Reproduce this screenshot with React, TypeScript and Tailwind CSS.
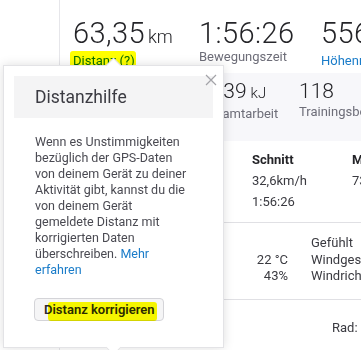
export default function App() {
  const font = "font-['Roboto','Liberation_Sans',sans-serif]";

  return (
    <div className={`relative w-[361px] h-[350px] overflow-hidden bg-white ${font} text-[#242428]`}>
      <div className="flex h-full">
        <div className="w-[60px] shrink-0 border-r border-[#e6e6ea]" />

        <div className="flex-1 flex flex-col min-w-0 overflow-hidden">
          {/* top stats */}
          <div className="h-[73px] shrink-0 pl-[13px] pt-[19px] flex whitespace-nowrap">
            <div className="w-[126px] shrink-0">
              <div className="text-[29px] leading-[28px] font-light tracking-[0.4px]">
                63,35<span className="text-[18px] ml-[3px] tracking-normal">km</span>
              </div>
              <div className="mt-[2px] text-[13px] leading-[16px] text-[#0a6fc2] relative">
                Distanz (?)
                <span className="absolute -left-[3px] -top-[2px] w-[66px] h-[18px] bg-[#ffff00] mix-blend-multiply rounded-[3px]" />
              </div>
            </div>
            <div className="w-[122px] shrink-0">
              <div className="text-[29px] leading-[28px] font-light tracking-[0.4px]">1:56:26</div>
              <div className="mt-[2px] text-[13px] leading-[16px] text-[#6d6d78]">Bewegungszeit</div>
            </div>
            <div className="shrink-0">
              <div className="text-[29px] leading-[28px] font-light tracking-[0.4px]">556<span className="text-[18px] ml-[3px] tracking-normal">m</span></div>
              <div className="mt-[2px] text-[13px] leading-[16px] text-[#1a7cc9]">Höhenmeter</div>
            </div>
          </div>

          {/* secondary stats band */}
          <div className="h-[68px] shrink-0 bg-[#f7f7fa] pl-[140px] pt-[8px] flex whitespace-nowrap">
            <div className="w-[99px] shrink-0">
              <div className="text-[21px] leading-[20px] font-light">1639<span className="text-[15px] ml-[4px]">kJ</span></div>
              <div className="mt-[3px] text-[13px] leading-[16px] text-[#6d6d78]">Gesamtarbeit</div>
            </div>
            <div className="shrink-0">
              <div className="text-[21px] leading-[20px] font-light">118</div>
              <div className="mt-[3px] text-[13px] leading-[16px] text-[#6d6d78]">Trainingsbelastung</div>
            </div>
          </div>

          {/* speed table */}
          <div className="shrink-0 pl-[192px] pt-[8px] pb-[10px] border-b border-[#e0e0e4] grid grid-cols-[100px_100px] text-[13px] leading-[21px] text-[#3a3a40] whitespace-nowrap">
            <div className="font-bold text-[#242428]">Schnitt</div>
            <div className="font-bold text-[#242428]">Max.</div>
            <div>32,6km/h</div>
            <div>73,4km/h</div>
            <div>1:56:26</div>
            <div />
          </div>

          {/* weather */}
          <div className="shrink-0 pt-[12px] pb-[14px] border-b border-[#e0e0e4] text-[13px] leading-[16.5px] text-[#3a3a40] whitespace-nowrap">
            <div className="flex">
              <div className="w-[228px] shrink-0 text-right" />
              <div className="ml-[23px]">Gefühlt</div>
            </div>
            <div className="flex">
              <div className="w-[228px] shrink-0 text-right">22 °C</div>
              <div className="ml-[23px]">Windgeschwindigkeit</div>
            </div>
            <div className="flex">
              <div className="w-[228px] shrink-0 text-right">43%</div>
              <div className="ml-[23px]">Windrichtung</div>
            </div>
          </div>

          <div className="pt-[20px] pl-[272px] text-[13px] leading-[16px] text-[#3a3a40] whitespace-nowrap">
            Rad: Canyon
          </div>
        </div>
      </div>

      {/* popover */}
      <div className="absolute left-[3px] top-[65px] w-[221px] h-[283px] bg-white border border-[#e3e3e6] shadow-[0_0_10px_rgba(0,0,0,0.13)] p-[10px] flex flex-col">
        <div className="absolute left-[104px] -top-[6px] w-[11px] h-[11px] rotate-45 bg-white border-l border-t border-[#e3e3e6]" />
        <div className="absolute left-[104px] -bottom-[6px] w-[11px] h-[11px] rotate-45 bg-white border-r border-b border-[#e3e3e6]" />

        <button className="absolute left-[201px] top-[8px] w-[12px] h-[12px]">
          <svg viewBox="0 0 12 12" width="12" height="12" fill="none" stroke="#a3a3a8" strokeWidth="1.2">
            <path d="M1 1L11 11M11 1L1 11" />
          </svg>
        </button>

        <div className="h-[42px] shrink-0 bg-[#f4f4f5] px-[21px] flex items-center text-[17.5px] text-[#3b3b42]">
          Distanzhilfe
        </div>

        <p className="px-[21px] pt-[16px] text-[12.5px] leading-[16px] text-[#4a4a52]">
          Wenn es Unstimmigkeiten bezüglich der GPS-Daten von deinem Gerät zu deiner Aktivität gibt, kannst du die von deinem Gerät gemeldete Distanz mit korrigierten Daten überschreiben. <span className="text-[#1a7cc9]">Mehr</span>{" "}
          <span className="text-[#1a7cc9]">erfahren</span>
        </p>

        <div className="flex-1" />

        <div className="pl-[20px] pb-[16px] flex">
          <div className="relative h-[23px] px-[9px] rounded-[4px] border border-[#d4d4d8] bg-[#f5f5f6] text-[13px] leading-[21px] font-semibold text-[#2a2a30] whitespace-nowrap">
            Distanz korrigieren
            <span className="absolute left-[13px] top-[3px] w-[109px] h-[19px] bg-[#ffff00] mix-blend-multiply rounded-[3px]" />
          </div>
        </div>
      </div>
    </div>
  );
}
